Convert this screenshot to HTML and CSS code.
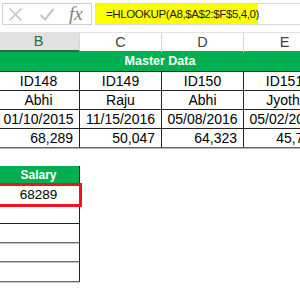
FILE: index.html
```html
<!DOCTYPE html>
<html>
<head>
<meta charset="utf-8">
<link rel="stylesheet" href="styles.css">
</head>
<body>
<div class="fbar">
  <div class="fbox">
    <svg class="ic ic-x" width="15" height="15" viewBox="0 0 15 15"><path d="M1.5 1.5 L13.5 13.5 M13.5 1.5 L1.5 13.5" stroke="#c4c4c4" stroke-width="1.6" fill="none"/></svg>
    <svg class="ic ic-ck" width="16" height="15" viewBox="0 0 16 15"><path d="M1.5 8 L6 12.5 L14.5 2" stroke="#c4c4c4" stroke-width="2" fill="none"/></svg>
    <span class="fx">fx</span>
  </div>
  <div class="finput"><span class="formula">=HLOOKUP(A8,$A$2:$F$5,4,0)</span></div>
</div>
<div class="colhead">
  <div class="ch sel">B</div>
  <div class="ch">C</div>
  <div class="ch">D</div>
  <div class="ch">E</div>
</div>
<div class="title">Master Data</div>
<div class="grid">
  <div class="c">ID148</div><div class="c">ID149</div><div class="c">ID150</div><div class="c">ID151</div>
  <div class="c">Abhi</div><div class="c">Raju</div><div class="c">Abhi</div><div class="c">Jyothi</div>
  <div class="c">01/10/2015</div><div class="c">11/15/2016</div><div class="c">05/08/2016</div><div class="c">05/02/2016</div>
  <div class="c num last">68,289</div><div class="c num last">50,047</div><div class="c num last">64,323</div><div class="c num last">45,712</div>
</div>
<div class="gap"></div>
<div class="sal">
  <div class="sh">Salary</div>
  <div class="sc hit">68289</div>
  <div class="sc dark"></div>
  <div class="sc"></div>
  <div class="sc"></div>
  <div class="sc end"></div>
</div>
</body>
</html>
```

FILE: styles.css
```css
html, body {
  margin: 0;
  padding: 0;
  background: #ffffff;
}
body {
  width: 300px;
  height: 300px;
  overflow: hidden;
  font-family: "Liberation Sans", Arial, sans-serif;
  color: #000;
}
.fbar {
  display: flex;
  height: 32px;
  box-sizing: border-box;
  padding-top: 3px;
}
.fbox {
  margin-left: 2px;
  width: 90px;
  height: 22px;
  box-sizing: border-box;
  border: 1px solid #d0d0d0;
  display: flex;
  align-items: center;
  padding-left: 5px;
}
.ic-x { margin-right: 16px; }
.ic-ck { margin-right: 14px; }
.fx {
  font-family: "Liberation Serif", "DejaVu Serif", serif;
  font-style: italic;
  font-size: 19px;
  color: #808080;
  line-height: 1;
  margin-top: -2px;
}
.finput {
  margin-left: 3px;
  flex: 1;
  height: 22px;
  box-sizing: border-box;
  border-top: 1px solid #d8d8d8;
  border-bottom: 1px solid #d8d8d8;
  display: flex;
}
.formula {
  display: block;
  width: 163px;
  box-sizing: border-box;
  padding-left: 11px;
  background: #ffff00;
  font-size: 11.5px;
  letter-spacing: -0.4px;
  line-height: 20px;
  color: #1a1a1a;
  white-space: nowrap;
}
.colhead {
  display: grid;
  grid-template-columns: repeat(4, 82px);
  margin-left: -2px;
  height: 19px;
  border-top: 1px solid #e2e2e2;
  box-sizing: border-box;
}
.ch {
  box-sizing: border-box;
  border-right: 1px solid #d6d6d6;
  text-align: center;
  font-size: 14.5px;
  line-height: 18px;
  color: #444;
}
.ch.sel {
  background: #e1e1e1;
  border-bottom: 2px solid #217346;
  color: #217346;
  line-height: 17px;
}
.title {
  height: 20px;
  background: #00b050;
  color: #fff;
  font-weight: bold;
  font-size: 12.5px;
  line-height: 20px;
  text-align: center;
  padding-left: 20px;
}
.grid {
  display: grid;
  grid-template-columns: repeat(4, 82px);
  grid-auto-rows: 19px;
  margin-left: -2px;
  border-top: 1px solid #222;
}
.c {
  box-sizing: border-box;
  border-right: 1px solid #222;
  border-bottom: 1px solid #222;
  text-align: center;
  font-size: 14px;
  line-height: 18px;
  white-space: nowrap;
  overflow: hidden;
}
.c.num {
  text-align: right;
  padding-right: 6px;
}
.c.last {
  border-bottom-color: #666;
  box-shadow: 0 1px 0 #b5b5b5;
}
.gap {
  height: 18px;
}
.sal {
  width: 82px;
  margin-left: -2px;
}
.sh {
  height: 19px;
  background: #00b050;
  color: #fff;
  font-weight: bold;
  font-size: 12px;
  line-height: 19px;
  text-align: center;
  box-sizing: border-box;
  border-right: 1px solid #222;
}
.sc {
  height: 19px;
  box-sizing: border-box;
  border-right: 1px solid #222;
  border-bottom: 1px solid #6e6e6e;
  box-shadow: 0 1px 0 #c4c4c4;
  text-align: center;
  font-size: 13.5px;
  line-height: 19px;
}
.sc.hit {
  height: 20px;
  border-bottom-color: #222;
  box-shadow: none;
  outline: 3px solid #f0141e;
  outline-offset: -1px;
  position: relative;
}
.sc.dark {
  border-bottom-color: #222;
  box-shadow: none;
}
.sc.end {
  height: 20px;
}
```
